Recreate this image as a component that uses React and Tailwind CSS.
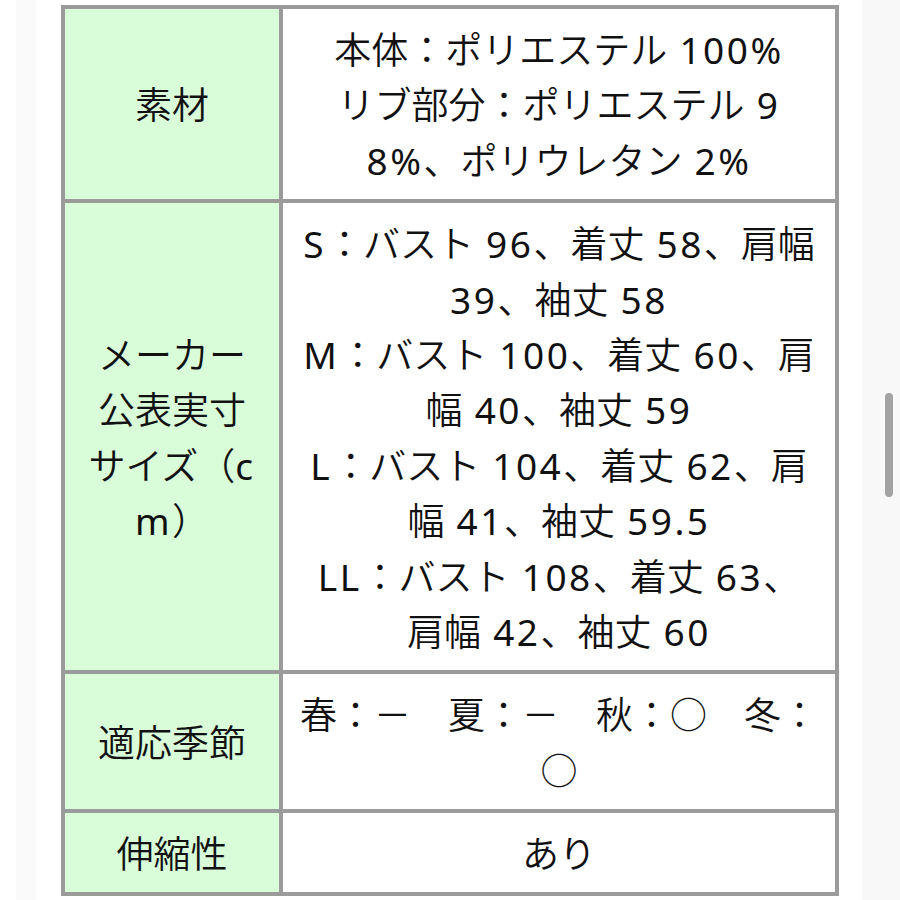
import React from "react";

function Txt({ s }) {
  const parts = s.split(/([\x20-\x7E]+)/).filter((p) => p.length > 0);
  return (
    <>
      {parts.map((p, i) =>
        /^[\x20-\x7E]+$/.test(p) ? (
          <span key={i} className="font-['Noto_Sans',sans-serif] font-normal tracking-[2.5px] leading-none">
            {p}
          </span>
        ) : (
          <span key={i} className="font-['Noto_Sans_CJK_JP',sans-serif] leading-none">
            {p}
          </span>
        )
      )}
    </>
  );
}

function Head({ lines }) {
  return (
    <div className="bg-[#d9fcd9] flex flex-col items-center justify-center">
      {lines.map((l, i) => (
        <div key={i} className="h-[55.4px] whitespace-nowrap">
          <Txt s={l} />
        </div>
      ))}
    </div>
  );
}

function Body({ lines }) {
  return (
    <div className="bg-white py-[12px] flex flex-col items-center">
      {lines.map((l, i) => (
        <div key={i} className="h-[55.4px] whitespace-nowrap text-center">
          <Txt s={l} />
        </div>
      ))}
    </div>
  );
}

export default function App() {
  return (
    <div className="relative w-[900px] h-[900px] overflow-hidden bg-white flex text-[#111111] text-[37px] leading-[55.4px] font-[350] font-['Noto_Sans_CJK_JP',sans-serif]">
      <div className="w-[16px] shrink-0 bg-white" />
      <div className="w-[20px] shrink-0 bg-[#fafafa]" />
      <div className="w-[826px] shrink-0 pl-[25px] pt-[5px]">
        <div className="w-[778px] grid grid-cols-[214px_552px] gap-[4px] p-[4px] bg-[#9b9b9b]">
          <Head lines={["素材"]} />
          <Body
            lines={[
              "本体：ポリエステル 100%",
              "リブ部分：ポリエステル 9",
              "8%、ポリウレタン 2%",
            ]}
          />
          <Head lines={["メーカー", "公表実寸", "サイズ（c", "m）"]} />
          <Body
            lines={[
              "S：バスト 96、着丈 58、肩幅",
              "39、袖丈 58",
              "M：バスト 100、着丈 60、肩",
              "幅 40、袖丈 59",
              "L：バスト 104、着丈 62、肩",
              "幅 41、袖丈 59.5",
              "LL：バスト 108、着丈 63、",
              "肩幅 42、袖丈 60",
            ]}
          />
          <Head lines={["適応季節"]} />
          <Body lines={["春：－　夏：－　秋：○　冬：", "○"]} />
          <Head lines={["伸縮性"]} />
          <Body lines={["あり"]} />
        </div>
      </div>
      <div className="w-[38px] shrink-0 bg-[#f8f8f8]" />
      <div className="absolute left-[885px] top-[393px] w-[8px] h-[104px] rounded-full bg-[#a3a3a3]" />
    </div>
  );
}
